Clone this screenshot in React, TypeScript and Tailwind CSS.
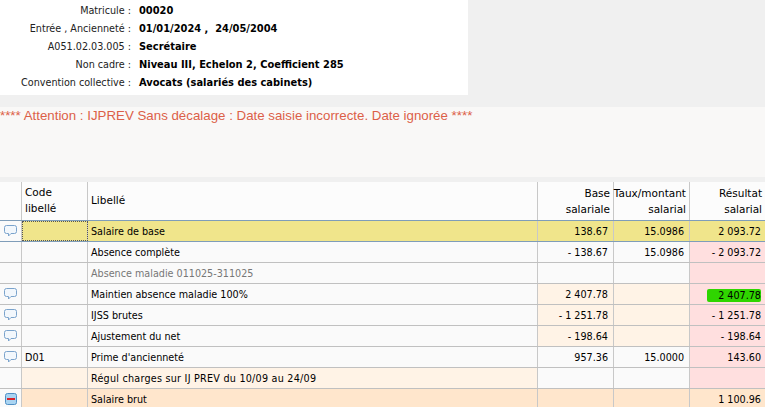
import React from 'react';

const INFO = [
  ['Matricule :', '00020'],
  ['Entrée , Ancienneté :', '01/01/2024 ,  24/05/2004'],
  ['A051.02.03.005 :', 'Secrétaire'],
  ['Non cadre :', 'Niveau III, Echelon 2, Coefficient 285'],
  ['Convention collective :', 'Avocats (salariés des cabinets)'],
];

const WHITE = 'bg-[#fafafa]';
const ORANGE = 'bg-[#fff3e6]';
const PINK = 'bg-[#ffdfdf]';
const YELLOW = 'bg-[#f0e58b]';
const BRUT = 'bg-[#ffe6cc]';

type Row = {
  icon?: 'bubble' | 'minus';
  code?: string;
  label: string;
  base?: string;
  taux?: string;
  res?: string;
  bg: string[]; // icon, code, label, base, taux, result
  grey?: boolean;
  wide?: boolean;
  highlight?: boolean;
};

const ROWS: Row[] = [
  { icon: 'bubble', label: 'Salaire de base', base: '138.67', taux: '15.0986', res: '2 093.72', bg: [WHITE, YELLOW, YELLOW, YELLOW, YELLOW, YELLOW] },
  { label: 'Absence complète', base: '- 138.67', taux: '15.0986', res: '- 2 093.72', bg: [WHITE, WHITE, WHITE, WHITE, WHITE, PINK] },
  { label: 'Absence maladie 011025-311025', grey: true, bg: [WHITE, WHITE, WHITE, WHITE, WHITE, PINK] },
  { icon: 'bubble', label: 'Maintien absence maladie 100%', base: '2 407.78', res: '2 407.78', highlight: true, bg: [WHITE, WHITE, WHITE, ORANGE, ORANGE, PINK] },
  { icon: 'bubble', label: 'IJSS brutes', base: '- 1 251.78', res: '- 1 251.78', bg: [WHITE, WHITE, WHITE, ORANGE, ORANGE, PINK] },
  { icon: 'bubble', label: 'Ajustement du net', base: '- 198.64', res: '- 198.64', bg: [WHITE, WHITE, WHITE, ORANGE, ORANGE, PINK] },
  { icon: 'bubble', code: 'D01', label: "Prime d'ancienneté", base: '957.36', taux: '15.0000', res: '143.60', bg: [WHITE, WHITE, WHITE, WHITE, WHITE, PINK] },
  { label: 'Régul charges sur IJ PREV du 10/09 au 24/09', wide: true, bg: [WHITE, ORANGE, ORANGE, WHITE, WHITE, PINK] },
  { icon: 'minus', label: 'Salaire brut', res: '1 100.96', bg: [WHITE, BRUT, BRUT, BRUT, BRUT, BRUT] },
];

const GRID = 'grid grid-cols-[22px_66px_450px_76px_76px_75px]';

function Bubble() {
  return (
    <svg width="13" height="12" viewBox="0 0 13 12">
      <path d="M2.500.5h8a2 2 0 0 1 2 2v4a2 2 0 0 1-2 2H7L4.500 11V8.500h-2a2 2 0 0 1-2-2v-4a2 2 0 0 1 2-2z" fill="#f2f7fc" stroke="#7aa3cc" />
    </svg>
  );
}

function Minus() {
  return (
    <svg width="12" height="12" viewBox="0 0 12 12">
      <rect x=".5" y=".5" width="11" height="11" rx="2" fill="#a9d4f2" stroke="#4f8fc4" />
      <rect x="2" y="5" width="8" height="2" fill="#d8232a" />
    </svg>
  );
}

function Cell({ className, children }: { className: string; children?: React.ReactNode }) {
  return <div className={`h-full border-r border-[#c8c8c8] flex items-center ${className}`}>{children}</div>;
}

export default function App() {
  return (
    <div className="w-[765px] h-[407px] overflow-hidden bg-[#f0f0f0] text-black font-['DejaVu_Sans',sans-serif] text-[10.7px] [font-stretch:condensed]">
      <div className="w-[468px] h-[95px] bg-white pt-[2px]">
        {INFO.map(([k, v]) => (
          <div key={k} className="h-[18px] flex items-center">
            <span className="w-[131px] text-right text-[#222] whitespace-nowrap">{k}</span>
            <span className="ml-[8px] font-bold whitespace-pre text-[9.9px] [font-stretch:normal]">{v}</span>
          </div>
        ))}
      </div>

      <div className="mt-[12px] h-[70px] bg-[#f9f8f7] font-['Liberation_Sans',sans-serif] text-[13.3px] leading-[17px] text-[#dc5f48] whitespace-nowrap [font-stretch:normal]">
        **** Attention : IJPREV Sans décalage : Date saisie incorrecte. Date ignorée ****
      </div>

      <div className="mt-[5px] bg-[#fcfcfc]">
        <div className={`${GRID} h-[39px] border-b border-[#7f9db9] leading-[16px] text-[10.5px] [font-stretch:normal]`}>
          <Cell className="" />
          <Cell className="pl-[3px] pb-[2px]"><span>Code<br />libellé</span></Cell>
          <Cell className="pl-[3px] pb-[2px]">Libellé</Cell>
          <Cell className="justify-end pr-[3px] text-right"><span>Base<br />salariale</span></Cell>
          <Cell className="justify-end pr-[3px] text-right whitespace-nowrap"><span>Taux/montant<br />salarial</span></Cell>
          <div className="h-full flex items-center justify-end pr-[3px] text-right"><span>Résultat<br />salarial</span></div>
        </div>
        {ROWS.map((r, i) => (
          <div key={r.label} className={`${GRID} h-[21px] border-b ${i === 0 ? 'border-[#7f9db9]' : 'border-[#c0c0c0]'} ${r.grey ? 'text-[#777]' : ''}`}>
            <Cell className={`${r.bg[0]} justify-center`}>
              {r.icon === 'bubble' && <Bubble />}
              {r.icon === 'minus' && <Minus />}
            </Cell>
            <Cell className={`${r.bg[1]} pl-[3px] pt-[2px] ${i === 0 ? 'outline-1 -outline-offset-1 outline-dotted outline-[#555]' : ''}`}>{r.code}</Cell>
            <Cell className={`${r.bg[2]} pl-[3px] pt-[2px] whitespace-nowrap ${r.wide ? 'tracking-[0.24px]' : ''}`}>{r.label}</Cell>
            <Cell className={`${r.bg[3]} justify-end pr-[5px] pt-[2px]`}>{r.base}</Cell>
            <Cell className={`${r.bg[4]} justify-end pr-[5px] pt-[2px]`}>{r.taux}</Cell>
            <div className={`${r.bg[5]} h-full flex items-center justify-end pr-[4px] pt-[2px]`}>
              {r.highlight ? <span className="bg-[#2fd500] pl-[11px] rounded-[2px] leading-[13px]">{r.res}</span> : r.res}
            </div>
          </div>
        ))}
      </div>
    </div>
  );
}
